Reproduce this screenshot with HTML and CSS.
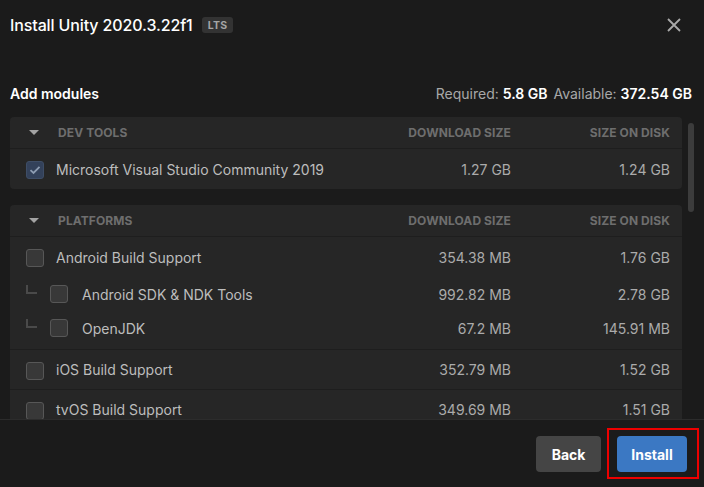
FILE: index.html
```html
<!DOCTYPE html>
<html>
<head>
<meta charset="utf-8">
<link rel="stylesheet" href="styles.css">
</head>
<body>
<div class="dialog">
  <div class="top">
    <div class="title-wrap">
      <h1 class="title">Install Unity 2020.3.22f1</h1>
      <span class="badge">LTS</span>
    </div>
    <button class="close" aria-label="Close">
      <svg width="14" height="14" viewBox="0 0 14 14"><path d="M1 1L13 13M13 1L1 13" stroke="#a9a9a9" stroke-width="1.8" fill="none"/></svg>
    </button>
  </div>
  <div class="summary">
    <span class="summary-title">Add modules</span>
    <span class="summary-info">Required: <b>5.8 GB</b><span class="avail">Available: <b>372.54 GB</b></span></span>
  </div>
  <div class="scroll-region">
    <div class="list">
      <section class="group">
        <div class="row head">
          <div class="cell-main"><span class="caret"></span><span class="head-label">DEV TOOLS</span></div>
          <div class="num">DOWNLOAD SIZE</div>
          <div class="num">SIZE ON DISK</div>
        </div>
        <div class="row item">
          <div class="cell-main"><span class="cb checked"><svg width="12" height="10" viewBox="0 0 12 10"><path d="M1.5 5.2L4.5 8L10.5 1.8" stroke="#8d9cb2" stroke-width="1.8" fill="none"/></svg></span><span class="label">Microsoft Visual Studio Community 2019</span></div>
          <div class="num">1.27 GB</div>
          <div class="num">1.24 GB</div>
        </div>
      </section>
      <section class="group">
        <div class="row head">
          <div class="cell-main"><span class="caret"></span><span class="head-label">PLATFORMS</span></div>
          <div class="num">DOWNLOAD SIZE</div>
          <div class="num">SIZE ON DISK</div>
        </div>
        <div class="subgroup">
          <div class="row item first">
            <div class="cell-main"><span class="cb"></span><span class="label">Android Build Support</span></div>
            <div class="num">354.38 MB</div>
            <div class="num">1.76 GB</div>
          </div>
          <div class="row sub">
            <div class="cell-main"><span class="tree"></span><span class="cb"></span><span class="label sub-label">Android SDK &amp; NDK Tools</span></div>
            <div class="num">992.82 MB</div>
            <div class="num">2.78 GB</div>
          </div>
          <div class="row sub">
            <div class="cell-main"><span class="tree"></span><span class="cb"></span><span class="label sub-label">OpenJDK</span></div>
            <div class="num">67.2 MB</div>
            <div class="num">145.91 MB</div>
          </div>
        </div>
        <div class="row item sep">
          <div class="cell-main"><span class="cb"></span><span class="label">iOS Build Support</span></div>
          <div class="num">352.79 MB</div>
          <div class="num">1.52 GB</div>
        </div>
        <div class="row item sep">
          <div class="cell-main"><span class="cb"></span><span class="label">tvOS Build Support</span></div>
          <div class="num">349.69 MB</div>
          <div class="num">1.51 GB</div>
        </div>
      </section>
    </div>
    <div class="scrollbar"><div class="thumb"></div></div>
  </div>
  <div class="footer">
    <button class="btn back">Back</button>
    <button class="btn install">Install</button>
  </div>
</div>
</body>
</html>
```
FILE: styles.css
```css
* { box-sizing: border-box; }
html, body { margin: 0; padding: 0; }
body {
  background: #1b1b1b;
  font-family: Inter, "Noto Sans", "Liberation Sans", sans-serif;
  color: #c0c0c0;
  width: 704px;
  height: 487px;
  overflow: hidden;
}
.dialog { display: flex; flex-direction: column; height: 487px; }
.top {
  height: 50px;
  display: flex;
  align-items: center;
  justify-content: space-between;
  padding: 0 23px 0 10px;
}
.title-wrap { display: flex; align-items: center; gap: 9px; }
.title {
  margin: 0;
  font-size: 16px;
  font-weight: 500;
  color: #ffffff;
  letter-spacing: -0.12px;
}
.badge {
  display: inline-flex;
  align-items: center;
  justify-content: center;
  height: 16px;
  padding: 0 6px;
  background: #333333;
  border-radius: 3px;
  font-size: 10.5px;
  font-weight: 700;
  color: #a5a5a5;
  letter-spacing: 0.3px;
}
.close {
  background: none;
  border: 0;
  padding: 0;
  width: 14px;
  height: 14px;
  display: flex;
}
.summary {
  margin-top: 33px;
  height: 20px;
  display: flex;
  align-items: center;
  justify-content: space-between;
  padding: 0 12px 0 10px;
  font-size: 14px;
}
.summary-title { font-weight: 600; color: #ffffff; }
.summary-info { color: #a8a8a8; }
.summary-info b { color: #ffffff; font-weight: 600; }
.avail { margin-left: 6px; }
.scroll-region {
  margin-top: 14px;
  height: 302px;
  display: flex;
  overflow: hidden;
  padding-left: 10px;
}
.list { width: 672px; flex: none; }
.scrollbar { width: 6px; margin-left: 6px; padding-top: 6px; flex: none; }
.thumb { height: 89px; background: #3c3c3c; border-radius: 3px; }
.group {
  background: #262626;
  border-radius: 4px;
  margin-bottom: 16px;
}
.row {
  display: grid;
  grid-template-columns: 1fr 161px 159px;
  align-items: center;
  padding: 0 12px 0 16px;
}
.cell-main { display: flex; align-items: center; }
.num { text-align: right; font-size: 14px; color: #ababab; }
.head {
  height: 32px;
  border-bottom: 1px solid #1e1e1e;
  padding-left: 19px;
}
.head .num, .head-label {
  font-size: 12px;
  font-weight: 700;
  color: #6e6e6e;
  letter-spacing: 0.1px;
}
.caret {
  width: 0;
  height: 0;
  border-left: 5px solid transparent;
  border-right: 5px solid transparent;
  border-top: 5px solid #a3a3a3;
  margin-right: 19px;
}
.item { height: 40px; }
.sep { border-top: 1px solid #1e1e1e; }
.sub { height: 34px; }
.subgroup { padding-bottom: 4px; }
.cb {
  width: 18px;
  height: 18px;
  border-radius: 3px;
  background: #383838;
  border: 1px solid #575757;
  flex: none;
  display: flex;
  align-items: center;
  justify-content: center;
  margin-top: 2px;
}
.cb.checked { background: #33415a; border-color: #3e4d66; }
.label { font-size: 14px; color: #bdbdbd; margin-left: 12px; }
.sub-label { margin-left: 14px; }
.tree {
  width: 11px;
  height: 9px;
  border-left: 2px solid #4a4a4a;
  border-bottom: 2px solid #4a4a4a;
  margin-right: 13px;
  align-self: flex-start;
}
.sub .cb { margin-top: 0; }
.footer {
  flex: 1;
  border-top: 1px solid #2c2c2c;
  background: #1b1b1b;
  display: flex;
  justify-content: flex-end;
  align-items: flex-start;
  gap: 16px;
  padding: 16px 17px 0 0;
}
.btn {
  height: 36px;
  border: 0;
  border-radius: 4px;
  font-family: Inter, "Noto Sans", "Liberation Sans", sans-serif;
  font-size: 14px;
  font-weight: 700;
  color: #ffffff;
  padding: 0;
}
.back { width: 65px; background: #454545; }
.install { width: 70px; background: #3b78c3; position: relative; }
.install::after {
  content: "";
  position: absolute;
  left: -10px;
  right: -12px;
  top: -8px;
  bottom: -7px;
  border: 2px solid #ee0000;
}
```
